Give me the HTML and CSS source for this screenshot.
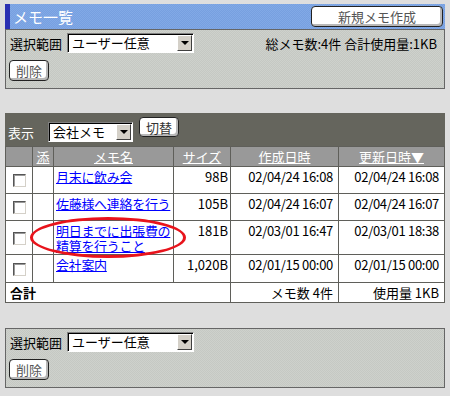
FILE: index.html
```html
<!DOCTYPE html>
<html lang="ja">
  <head>
    <meta charset="UTF-8" />
    <title>メモ一覧</title>
    <link rel="stylesheet" href="styles.css">
  </head>
  <body>
    <div class="titlebar">
      <h1>メモ一覧</h1>
      <button class="btn btn_new">新規メモ作成</button>
    </div>
    <div class="panel">
      <div class="panel_row">
        <div class="field">
          <span class="field_label">選択範囲</span>
          <span class="combo combo_wide"><span class="combo_value">ユーザー任意</span><span class="combo_arrow"></span></span>
        </div>
        <span class="summary">総メモ数:4件 合計使用量:1KB</span>
      </div>
      <button class="btn btn_small">削除</button>
    </div>

    <div class="list">
      <div class="list_toolbar">
        <div class="field field_dark">
          <span class="field_label">表示</span>
          <span class="combo combo_narrow"><span class="combo_value">会社メモ</span><span class="combo_arrow"></span></span>
        </div>
        <button class="btn btn_switch">切替</button>
      </div>
      <table class="memo_table">
        <colgroup>
          <col class="c_check" />
          <col class="c_attach" />
          <col class="c_name" />
          <col class="c_size" />
          <col class="c_date" />
          <col class="c_date2" />
        </colgroup>
        <thead>
          <tr>
            <th></th>
            <th><a href="#">添</a></th>
            <th><a href="#">メモ名</a></th>
            <th><a href="#">サイズ</a></th>
            <th><a href="#">作成日時</a></th>
            <th><a href="#">更新日時▼</a></th>
          </tr>
        </thead>
        <tbody>
          <tr class="row">
            <td class="check"><input type="checkbox" /></td>
            <td></td>
            <td class="name"><a href="#">月末に飲み会</a></td>
            <td class="num">98B</td>
            <td class="date">02/04/24 16:08</td>
            <td class="date">02/04/24 16:08</td>
          </tr>
          <tr class="row">
            <td class="check"><input type="checkbox" /></td>
            <td></td>
            <td class="name"><a href="#">佐藤様へ連絡を行う</a></td>
            <td class="num">105B</td>
            <td class="date">02/04/24 16:07</td>
            <td class="date">02/04/24 16:07</td>
          </tr>
          <tr class="row row_tall">
            <td class="check"><input type="checkbox" /></td>
            <td></td>
            <td class="name"><a href="#">明日までに出張費の精算を行うこと</a></td>
            <td class="num">181B</td>
            <td class="date">02/03/01 16:47</td>
            <td class="date">02/03/01 18:38</td>
          </tr>
          <tr class="row row_last">
            <td class="check"><input type="checkbox" /></td>
            <td></td>
            <td class="name"><a href="#">会社案内</a></td>
            <td class="num">1,020B</td>
            <td class="date">02/01/15 00:00</td>
            <td class="date">02/01/15 00:00</td>
          </tr>
          <tr class="total">
            <td colspan="4" class="total_label">合計</td>
            <td class="total_num">メモ数 4件</td>
            <td class="total_num">使用量 1KB</td>
          </tr>
        </tbody>
      </table>
      <div class="mark"></div>
    </div>

    <div class="panel panel_bottom">
      <div class="panel_row">
        <div class="field">
          <span class="field_label">選択範囲</span>
          <span class="combo combo_wide"><span class="combo_value">ユーザー任意</span><span class="combo_arrow"></span></span>
        </div>
      </div>
      <button class="btn btn_small">削除</button>
    </div>
  </body>
</html>
```

FILE: styles.css
```css
* {
  box-sizing: border-box;
}
body {
  margin: 0;
  padding: 4px 5px;
  width: 450px;
  background-color: #dedede;
  font-family: "Noto Sans CJK JP", sans-serif;
  font-size: 13px;
  line-height: 15px;
  color: #000;
}

.titlebar {
  display: flex;
  align-items: center;
  justify-content: space-between;
  height: 25px;
  padding: 0 2px 0 3px;
  border-left: 5px solid #2a30b2;
  background-color: #7ba3e2;
  background-image: repeating-conic-gradient(#77a0e0 0 25%, #82a9e6 0 50%);
  background-size: 2px 2px;
}
.titlebar h1 {
  margin: 0;
  font-size: 15px;
  font-weight: normal;
  color: #fff;
}

.panel {
  height: 60px;
  padding: 3px 4px;
  border: 1px solid #666;
  background-color: #c9ccc7;
  background-image: repeating-conic-gradient(#c5c8c3 0 25%, #ced1cc 0 50%);
  background-size: 2px 2px;
}
.panel_bottom {
  margin-top: 25px;
}
.panel_row {
  display: flex;
  align-items: center;
  justify-content: space-between;
  height: 20px;
  margin-bottom: 7px;
}
.field {
  display: flex;
  align-items: center;
  gap: 5px;
}
.field_dark {
  color: #fff;
  gap: 14px;
  margin-top: 9px;
}
.summary {
  margin-right: 3px;
}

.combo {
  display: flex;
  height: 20px;
  border: 1px solid;
  border-color: #808080 #fff #fff #808080;
  box-shadow: inset 1px 1px 0 #000;
  background-color: #fff;
  color: #000;
  padding: 1px;
}
.combo_wide {
  width: 127px;
}
.combo_narrow {
  width: 85px;
}
.combo_value {
  flex: 1;
  padding-left: 3px;
  line-height: 16px;
}
.combo_arrow {
  position: relative;
  width: 15px;
  height: 16px;
  border: 1px solid;
  border-color: #fff #404040 #404040 #fff;
  background-color: #d4d0c8;
}
.combo_arrow::after {
  content: "";
  position: absolute;
  left: 3px;
  top: 5px;
  border-left: 4px solid transparent;
  border-right: 4px solid transparent;
  border-top: 4px solid #000;
}

.btn {
  display: block;
  height: 21px;
  padding: 0;
  border: 1px solid #222;
  border-radius: 4px;
  background-color: #fff;
  box-shadow: inset -2px -2px 0 #b8b8b8;
  font-family: inherit;
  font-size: 13px;
  color: #555;
}
.btn_small {
  width: 40px;
  margin-left: -1px;
}
.btn_new {
  width: 132px;
}
.btn_switch {
  width: 40px;
  height: 20px;
  margin-top: 4px;
  margin-left: 6px;
  color: #333;
}

.list {
  position: relative;
  margin-top: 24px;
}
.list_toolbar {
  display: flex;
  align-items: flex-start;
  height: 33px;
  padding-left: 3px;
  background-color: #65655d;
}

.memo_table {
  width: 440px;
  table-layout: fixed;
  border-collapse: collapse;
  border: 1px solid #5f5f5a;
}
.c_check { width: 27px; }
.c_attach { width: 21px; }
.c_name { width: 120px; }
.c_size { width: 57px; }
.c_date { width: 108px; }
.c_date2 { width: 106px; }

.memo_table th,
.memo_table td {
  border: 1px solid #5f5f5a;
  padding: 0;
}
.memo_table thead tr {
  height: 20px;
}
.memo_table th {
  background-color: #999;
  font-weight: normal;
  text-align: center;
  vertical-align: middle;
}
.memo_table th a {
  color: #fff;
}
.memo_table td {
  background-color: #fff;
  vertical-align: top;
  padding-top: 2px;
}
.row {
  height: 27px;
}
.row_tall {
  height: 34px;
}
.row_last {
  height: 28px;
}
.memo_table td.check {
  text-align: center;
  vertical-align: middle;
  padding: 0;
}
.check input {
  appearance: none;
  display: block;
  width: 13px;
  height: 13px;
  margin: 1px auto 0;
  border: 1px solid;
  border-color: #555 #d4d0c8 #d4d0c8 #555;
  box-shadow: inset 1px 1px 0 #999;
  background-color: #fff;
}
.memo_table td.name {
  padding-left: 2px;
  letter-spacing: -0.3px;
}
.name a {
  color: #00f;
}
.memo_table td.num {
  text-align: right;
  padding-right: 2px;
}
.memo_table td.date {
  text-align: right;
  padding-right: 5px;
  letter-spacing: -0.3px;
}
.total {
  height: 20px;
}
.memo_table .total td {
  vertical-align: middle;
  padding-top: 0;
}
.memo_table td.total_label {
  padding-left: 4px;
  font-weight: bold;
}
.memo_table td.total_num {
  text-align: right;
  padding-right: 5px;
}

.mark {
  position: absolute;
  left: 25px;
  top: 104px;
  width: 156px;
  height: 41px;
  border: 3px solid #e8141c;
  border-radius: 50%;
  pointer-events: none;
}
```
